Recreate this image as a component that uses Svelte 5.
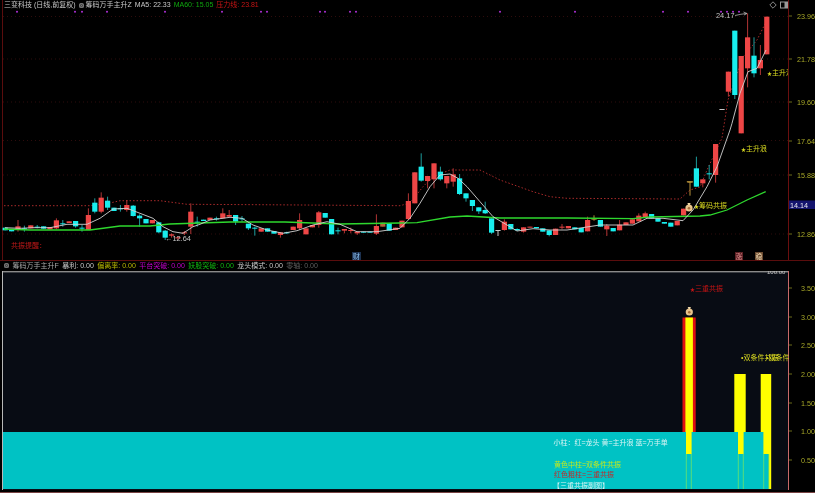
<script>
  // candle x: fixed 6.4px step, y values below are crop coords -> base + v / 3
  const stepX = (i) => 5.2 + 6.4 * i;

  const toY = (base, rows) =>
    rows.map(([c, t, b, h, l]) => ({
      c,
      t: base + t / 3,
      b: base + b / 3,
      h: base + (h ?? t) / 3,
      l: base + (l ?? b) / 3
    }));

  const candles = [
    ...toY(185, [
      ['c',128,136],['c',132,139],['r',124,132,105,140],['c',130,132,122,140],['r',121,130],
      ['c',125,127,120,130],['c',124,131],['r',126,133],['r',106,130,100,133],['c',115,117,105,125],
      ['r',109,114],['c',108,124,108,128],['c',128,130,120,140],['r',90,135,70,135],['c',53,80,40,85],
      ['r',38,80,22,85],['c',47,68,35,75],['c',68,78],['c',70,73,60,80],['r',60,75,45,80],
      ['c',62,93,60,95],['c',92,100,88,125],['c',102,115],['r',105,115],['c',112,142,110,145],
      ['c',137,158,135,165],['r',148,152,145,158],['r',157,160,154,165],['r',142,144,138,150],['r',80,125,55,147],
      ['c',110,112,95,125],['c',104,108],['r',98,105],['c',100,102,95,107],['r',85,100,70,100],
      ['r',90,95,75,95],['c',90,110,90,120],['c',100,102,93,110],['c',116,130,116,135],['c',128,130,125,152],
      ['r',130,140],['c',130,140],['c',138,146],['r',142,150,142,158],['c',142,144,140,147],
      ['r',125,135],['r',105,130,85,135],['r',130,148],['r',120,127],['r',82,120,78,128],
      ['c',84,98],['c',102,148],['c',136,138,128,148],['r',132,137,132,145],['r',135,137,128,145],
      ['r',140,145,140,150],['c',140,143],['c',140,143],['r',123,146,88,150],['b',113,125],
      ['c',115,137],['r',128,135]
    ]),
    ...toY(150, [
      ['r',212,232],['r',153,207,130,210],['r',67,160],['c',50,92,10,95],['r',78,93,78,115],
      ['r',40,88,40,115],['c',65,88,50,92],['r',78,100,78,115],['r',73,95,55,110],['c',85,132,72,135],
      ['c',130,145,130,155],['c',150,168,150,183],['c',172,184,172,192],['c',180,190,155,192],['c',205,248,205,252],
      ['w',240,241,240,258],['r',215,240,208,242],['c',222,238],['c',237,241,235,243],['r',232,245,232,248]
    ]),
    ...toY(130, [
      ['r',290,292],['c',291,295],['c',295,305],['c',301,315,301,319],['r',296,315],
      ['r',290,292,282,298],['r',288,295],['c',292,298],['c',294,307],['r',270,304,260,304],
      ['g',266,268,256,272],['c',270,290],['r',287,298,282,318],['c',294,304],['r',284,301,270,301],
      ['r',277,285],['r',268,281],['r',257,274,250,274],['r',250,262,245,262],['c',252,265],
      ['c',265,275],['c',276,281],['c',278,290],['r',273,286],['r',236,256],
      ['g',155,157,155,197],['c',115,170,80,170],['r',148,160,148,172],['c',130,133,105,148],['r',42,135,42,158]
    ]),
    ...toY(0, [
      ['w',327,329],['r',215,275,215,290],['c',92,285,92,297],['r',168,400],['r',112,205,40,262],
      ['c',167,220,112,232],['r',180,205,135,225],['r',50,163]
    ])
  ].map((k, i) => ({ ...k, x: stepX(i) }));

  const fill = { r: '#ee4646', c: '#18eeee', w: '#c8c8c8', g: '#b8923a', b: '#b5653a' };
  const wick = { r: '#b03434', c: '#1c9c9c', w: '#c8c8c8', g: '#b8923a', b: '#8d5a30' };

  const pts = (list) => list.map((p) => p.join(',')).join(' ');

  const ma60 = [[4,229],[30,230],[90,230],[120,226],[150,226],[170,224],[230,222],[285,222],[340,224],[400,223],[417,222.7],[450,217],[467,216],[500,218],[567,218],[633,218.7],[650,217],[700,216],[710,215],[727,210],[747,200],[765.7,191.6]];
  const ma5 = [[5,227.7],[20,228.3],[33,227.7],[50,227.7],[67,224.3],[87,224.3],[100,218.3],[113,209],[127,208.3],[140,213.3],[153,218.3],[163,226.7],[173,231.7],[183,233.3],[193,226.7],[200,224.3],[210,220],[230,217.3],[242,218.3],[253,225],[267,230],[283,233.3],[297,230.7],[313,225],[327,221.7],[340,224.3],[357,231.7],[377,231.7],[400,228.3],[410,218.3],[420,203.3],[430,186.7],[440,175],[450,174],[458,178.3],[467,186.7],[480,201.7],[493,216.7],[507,225],[517,231],[533,228.7],[550,230],[567,230],[600,225],[633,225],[647,218.3],[663,218.3],[683,220.7],[693,210],[707,186.7],[717,166.7],[730,130],[732,123.3],[740,93.3],[748,71.7],[757,68.3],[766,50]];
  const press = [[4,205.7],[90,205.7],[110,203],[120,200.7],[160,200.7],[187,204.3],[260,204.7],[400,205.7],[410,203],[423,186.7],[433,176.7],[450,170],[480,170],[500,180],[533,191.7],[550,196.7],[567,198.3],[680,199],[690,190],[700,187],[707,170],[722,138],[728,100],[743,57],[757,40],[767,20]];

  const gridY = [16.5, 59, 102, 140.5, 175, 234];
  const dots = [17,75,82,107,165,222,261,267,320,325,350,356,500,575,663,688,721,727,733,739];

  const priceAxis = [['23.96',16],['21.78',59],['19.60',102],['17.64',141],['15.88',175],['12.86',234]];
  const subAxis = [['3.50',288],['3.00',317],['2.50',345],['2.00',374],['1.50',403],['1.00',431],['0.50',460]];
</script>

{#snippet bag(x, y)}
  <g transform="translate({x} {y})">
    <circle cy="1" r="3.6" fill="#e8c48c" />
    <path d="M-1.6 -4 L1.6 -4 L0.8 -2 L-0.8 -2 Z" fill="#f0d8a8" />
    <circle cy="1.2" r="1.3" fill="#a8703a" />
  </g>
{/snippet}

<div class="screen">
  <div class="upper">
    <div class="legend over">
      <span class="name">三变科技 (日线,前复权)</span>
      <span class="ring"></span>
      <span class="name tight">筹码万手主升Z</span>
      <span class="name">MA5: 22.33</span>
      <span class="green">MA60: 15.05</span>
      <span class="red">压力线: 23.81</span>
    </div>

    <div class="tools">
      <svg width="8" height="8" viewBox="0 0 8 8"><path d="M4 .8 7.2 4 4 7.2 .8 4Z" fill="none" stroke="#888" /></svg>
      <svg width="8" height="8" viewBox="0 0 8 8"><rect x=".5" y="1" width="7" height="6" fill="none" stroke="#999" /><rect x="4.5" y="1" width="3" height="6" fill="#999" /></svg>
    </div>

    <svg class="plot" width="788" height="260" viewBox="0 0 788 260">
      <line x1="2.5" y1="0" x2="2.5" y2="260" stroke="#5a0d0d" />
      {#each gridY as y}
        <line x1="3" y1={y} x2="788" y2={y} stroke="#2e0c0c" stroke-dasharray="1 3" />
      {/each}
      {#each dots as x}
        <circle cx={x} cy="11.7" r="1" fill="#b030d8" />
      {/each}

      <polyline points={pts(press)} class="line" stroke="#a82a2a" stroke-width="1" stroke-dasharray="1.5 2" />

      {#each candles as k}
        <line x1={k.x} y1={k.h} x2={k.x} y2={k.l} stroke={wick[k.c]} />
        <rect x={k.x - 2.6} y={k.t} width="5.2" height={Math.max(k.b - k.t, 1)} fill={fill[k.c]} />
      {/each}
      <line x1="686.8" y1="181.7" x2="692.8" y2="181.7" stroke="#b8923a" />

      <polyline points={pts(ma60)} class="line" stroke="#2ed82e" stroke-width="1.3" />
      <polyline points={pts(ma5)} class="line" stroke="#d2d2d2" stroke-width="0.9" />

      <text x="11" y="248" class="t alert">共振提醒：</text>
      <text x="165" y="240.5" class="t soft">←12.64</text>
      <text x="716" y="18" class="t soft">24.17</text>
      <path d="M735 15.5 Q741 14 746.5 13.5 M743.5 12 L747 13.5 L744 15" fill="none" stroke="#c8c8c8" stroke-width=".7" />
      <text x="741" y="151" class="t gold"><tspan class="star">★</tspan>主升浪</text>
      <text x="767" y="75" class="t gold"><tspan class="star">★</tspan>主升浪</text>
      <text x="694" y="207.5" class="t gold"><tspan class="star">★</tspan>筹码共振</text>
      {@render bag(689, 207)}

      <rect x="352" y="252" width="9" height="8" fill="#1c3150" />
      <text x="353" y="258.8" class="t tag-blue">财</text>
      <rect x="735" y="252" width="8" height="8" fill="#5c2024" />
      <text x="735.5" y="258.8" class="t tag-red">涨</text>
      <rect x="755" y="252" width="8" height="8" fill="#6a4a30" />
      <text x="755.5" y="258.8" class="t tag-tan">稳</text>
    </svg>

    <svg class="axis" width="26" height="260" viewBox="789 0 26 260">
      {#each priceAxis as [label, y]}
        <line x1="789" y1={y} x2="792" y2={y} stroke="#6a6a18" />
        <text x="797" y={y + 2.6} class="t tick">{label}</text>
      {/each}
      <rect x="789" y="200.5" width="26" height="8.5" fill="#14146e" />
      <text x="790" y="207.6" class="t last">14.14</text>
    </svg>
  </div>

  <div class="legend sub">
    <span class="ring"></span>
    <span class="dim">筹码万手主升F</span>
    <span class="name">暴利: 0.00</span>
    <span class="yellow">偏离率: 0.00</span>
    <span class="magenta">平台突破: 0.00</span>
    <span class="lime">妖股突破: 0.00</span>
    <span class="name">龙头模式: 0.00</span>
    <span class="off">零轴: 0.00</span>
  </div>

  <div class="lower">
    <svg class="plot" width="789" height="219" viewBox="0 271 789 219">
      <rect x="2" y="271" width="786" height="219" fill="#080c14" />
      <rect x="2" y="271" width="786" height="1.4" fill="#8a8a8a" />
      <rect x="2" y="271" width="1" height="219" fill="#b8b8b8" />
      <rect x="788" y="271" width="1" height="219" fill="#c86a6a" />

      <rect x="682.5" y="317.5" width="13.2" height="115" fill="#e01010" />
      <rect x="685.4" y="317.5" width="7.5" height="115" fill="#ffff00" />
      <rect x="734.3" y="374" width="11.4" height="58" fill="#ffff00" />
      <rect x="760.7" y="374" width="10.5" height="58" fill="#ffff00" />

      <rect x="3" y="432" width="765.8" height="57" fill="#00c2c4" />
      <rect x="768.8" y="432" width="2.4" height="57" fill="#ffff00" />

      {#each [686, 738, 763.4] as x}
        <rect x={x} y="432" width="5.6" height="22" fill="#ffff00" />
        <line x1={x + 0.3} y1="454" x2={x + 0.3} y2="489" stroke="#58dc7c" />
        <line x1={x + 5.3} y1="454" x2={x + 5.3} y2="489" stroke="#58dc7c" />
      {/each}

      <text x="767" y="273.5" class="t clip">100.00</text>
      <text x="690" y="291" class="t crimson"><tspan class="star">★</tspan>三重共振</text>
      {@render bag(689.3, 311)}
      <text x="741" y="359.5" class="t gold">•双条件共振</text>
      <text x="766" y="359.5" class="t gold">•双条件共振</text>

      <text x="553.5" y="444.5" class="t note">小柱：红=龙头 黄=主升浪 蓝=万手单</text>
      <text x="554" y="466.8" class="t note-yellow">黄色中柱=双条件共振</text>
      <text x="554" y="477" class="t note-red">红色粗柱=三重共振</text>
      <text x="553" y="488" class="t note">【三重共振副图】</text>
    </svg>

    <svg class="axis" width="26" height="219" viewBox="789 271 26 219">
      {#each subAxis as [label, y]}
        <line x1="789" y1={y} x2="792" y2={y} stroke="#6a6a18" />
        <text x="801" y={y + 2.6} class="t tick">{label}</text>
      {/each}
    </svg>
  </div>
</div>

<style>
  :global(body) {
    background: #000;
  }

  .screen {
    width: 815px;
    height: 493px;
    overflow: hidden;
    background: #000;
    display: flex;
    flex-direction: column;
    font-family: "Liberation Sans", "Noto Sans CJK SC", sans-serif;
    filter: blur(0.35px);
  }

  .upper {
    position: relative;
    height: 260px;
    display: flex;
    flex: none;
    box-shadow: 0 1px 0 #5a0d0d;
  }

  .lower {
    display: flex;
    flex: none;
    box-sizing: border-box;
    height: 222px;
    border-bottom: 1px solid #7a4444;
  }

  .plot {
    display: block;
    flex: none;
  }

  .upper .plot {
    border-right: 1px solid #6a0f0f;
  }

  .axis {
    display: block;
    flex: none;
  }

  .legend {
    display: flex;
    align-items: center;
    font-size: 7px;
    line-height: 10px;
    white-space: nowrap;
  }

  .legend.over {
    position: absolute;
    left: 4px;
    top: 0;
    gap: 3px;
  }

  .legend.sub {
    height: 11px;
    flex: none;
    gap: 3.5px;
    padding-left: 4px;
  }

  .ring {
    width: 5px;
    height: 5px;
    border-radius: 50%;
    background: #8c8c8c;
    box-shadow: inset 0 0 0 1.2px #777, inset 0 0 0 2px #333;
  }

  .tight {
    margin-left: -1px;
  }

  .name { color: #c8c8c8; }
  .dim { color: #a8a8a8; }
  .off { color: #5e5e5e; }
  .green { color: #0fa80f; }
  .red { color: #c81414; }
  .yellow { color: #b8b800; }
  .magenta { color: #c400cc; }
  .lime { color: #10b810; }

  .tools {
    position: absolute;
    right: 27px;
    top: 1px;
    display: flex;
    gap: 3px;
  }

  .t {
    font-family: "Liberation Sans", "Noto Sans CJK SC", sans-serif;
    font-size: 7px;
  }

  .star { font-size: 5px; }
  .line { fill: none; }
  .alert { fill: #c01818; }
  .soft { fill: #c4c4c4; font-size: 7.4px; }
  .gold { fill: #d8d820; }
  .crimson { fill: #c81414; }
  .clip { fill: #c8c8c8; font-size: 6px; }
  .tag-blue { fill: #8cc0f0; }
  .tag-red { fill: #e09090; }
  .tag-tan { fill: #f0d8b0; }
  .tick { fill: #a8a828; font-size: 7.2px; }
  .last { fill: #e8e8f0; font-size: 7.2px; }
  .note { fill: #d8f4f4; }
  .note-yellow { fill: #c0e820; }
  .note-red { fill: #c02a2a; }
</style>
